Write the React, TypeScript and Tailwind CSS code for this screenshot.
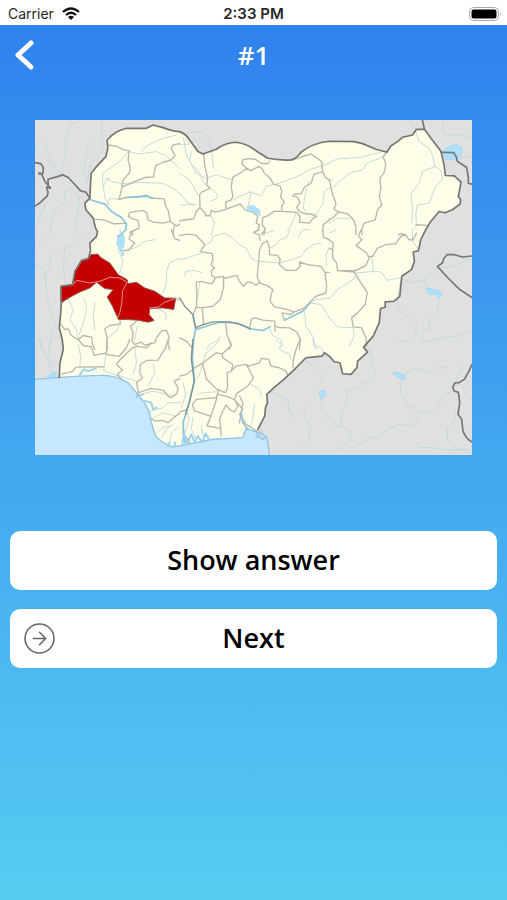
import React from 'react';

const COUNTRY =
  'M180 250L182 205L184 175L200 155L228 125L234 100L232 75Q255 48 290 40L350 40L370 30L400 38Q432 50 450 50Q470 58 480 75L505 110L520 117L560 103Q590 82 620 82Q650 85 680 108L715 130Q750 137 785 135Q800 132 815 112Q850 84 900 79L975 80L1000 86L1040 103L1073 112L1085 93L1105 80L1120 67L1150 60L1162 43L1186 43L1200 62L1236 110L1245 150L1249 182L1276 183L1296 202L1288 245L1295 255L1293 268L1270 285L1248 294L1230 290L1205 320L1190 345L1175 375L1168 408L1152 412L1156 440L1147 465L1118 485L1112 545L1095 560L1068 562L1068 578L1054 582L1050 625L1032 665L1003 698L1015 713L985 740L983 760L965 780L940 778L932 745L915 742L900 725L885 715L878 725L850 728L830 730L815 745L790 770L760 798L735 818L712 840L714 865L708 880L706 905L685 945L680 953L650 942L640 970L590 973L550 975L500 985L450 995L430 998Q390 985 375 960L365 925L355 885L340 860L320 835L295 805Q255 780 210 783L150 785L88 789L90 745L100 705L97 675L88 640L92 600L94 565L93 515L128 510L135 470L155 437L175 432L182 410L180 385L200 365L203 350L197 340L190 310L168 285L165 265Z';

const BORDER =
  'M685 945L706 905L708 880L714 865L712 840L735 818L760 798L790 770L815 745L830 730L850 728L878 725L885 715L900 725L915 742L932 745L940 778L965 780L983 760L985 740L1015 713L1003 698L1032 665L1050 625L1054 582L1068 578L1068 562L1095 560L1112 545L1118 485L1147 465L1156 440L1152 412L1168 408L1175 375L1190 345L1205 320L1230 290L1248 294L1270 285L1293 268L1295 255L1288 245L1296 202L1276 183L1249 182L1245 150L1236 110L1200 62L1186 43L1162 43L1150 60L1120 67L1105 80L1085 93L1073 112L1040 103L1000 86L975 80L900 79Q850 84 815 112Q800 132 785 135Q750 137 715 130L680 108Q650 85 620 82Q590 82 560 103L520 117L505 110L480 75Q470 58 450 50Q432 50 400 38L370 30L350 40L290 40Q255 48 232 75L234 100L228 125L200 155L184 175L182 205L180 250L165 265L168 285L190 310L197 340L203 350L200 365L180 385L182 410L175 432L155 437L135 470L128 510L93 515L94 565L92 600L88 640L97 675L100 705L90 745L88 789';

const NEIGHBOUR_BORDERS =
  'M15 143L32 146L40 158L39 175L27 177M27 174L35 178L45 200L62 220L50 217L54 232L52 243L30 264L15 274M55 217L54 193L80 186L98 180L115 188L135 209L152 228L168 232L180 250M1186 43L1180 15M1236 112L1274 113L1282 126L1285 139L1313 158L1318 187L1318 205L1329 208M1329 424L1300 427L1276 420L1254 420L1245 430L1240 445L1225 455L1257 490L1290 523L1329 549M1329 750L1320 770L1306 795L1290 805L1278 805L1271 818L1275 830L1288 834L1292 865L1287 900L1298 915L1302 950Q1310 973 1329 983';

const COAST =
  'M15 795L88 789L150 785L210 783Q255 780 295 805L320 835L340 860L355 885L365 925L375 960Q390 985 430 998L450 995L500 985L550 975L590 973L640 970L650 942L680 953L690 970L700 975L710 966L716 990L720 1023';

// One group of strokes per tile of the map sheet.
const STATES: { at: string; d: string }[] = [
  {
    at: 'translate(0 0)',
    d: 'M234 90L260 94L280 104L298 108L295 135L302 162L298 175L280 195L276 220L270 245L268 254L290 248L330 247L348 240L365 250L403 252L408 275L415 285L422 320L400 325L370 322L355 315L350 293L340 287L320 290L300 293L296 304L308 312L325 317L328 340L300 352L310 360M195 313L225 316L250 327L290 326M276 217L315 200L345 188L371 186L378 152L400 142L425 135L436 122L425 100L430 90L450 86M422 320L440 334L450 328M433 334L430 360',
  },
  {
    at: 'translate(450 0)',
    d: 'M72 117L75 150L84 188L82 210L91 221L66 232L60 240L61 278L50 290L42 312L0 318M61 278L75 293L78 303L92 303L95 287L106 292L136 285L140 283L138 262L155 255L160 245L155 215L160 187L185 173L202 160L187 147L190 134L210 131L228 133L245 145L264 147L272 138M202 160L214 168L236 155L248 161L254 174L272 190L282 208L302 213L307 230L304 247L315 262L307 275L308 290L352 293L362 306L360 322L390 325L402 310L412 305L395 298L378 297L360 290L352 278L362 262L354 247L340 243L346 238L366 236L376 215L395 206L404 178L430 171L427 140L395 117L360 128L335 137M140 283L165 274L182 267L198 286L222 293L235 305L230 325L240 330L236 345M308 290L285 289L262 304L250 308L248 330L257 342L253 360M430 171L440 190L450 195M450 315L432 330L430 350',
  },
  {
    at: 'translate(900 0)',
    d: 'M172 112L162 125L170 150L164 175L152 190L155 220L150 245L158 270L145 285L138 315L104 326L98 345L98 360M0 195L10 240L20 265L14 284L28 291L55 297L74 317L80 335L80 360M28 291L10 310L0 313M208 360L215 357L228 360M260 330L295 332',
  },
  {
    at: 'translate(0 345)',
    d: 'M278 62L296 62L315 40L298 28L305 10L315 0M438 206L450 212M92 285L105 300L115 298L124 318L145 330L160 318L185 323L188 345L195 360M270 270L272 283L240 288L225 297L232 325L232 360M320 275L302 290L310 310L307 335L315 345L335 338L345 347L375 340L380 325L395 305L410 302M410 302L418 322L415 345L420 360M425 0L435 27L450 32',
  },
  {
    at: 'translate(450 345)',
    d: 'M0 17L25 13L50 17L62 30L76 45L62 66L98 72L100 90L94 105L105 115L95 125L97 138L108 144L130 140L135 146L160 140L172 137L180 155L192 170L203 157L215 158L230 167L241 157L233 143L237 100L240 60L250 40L263 33L270 55L270 75L295 78L302 88L300 105L320 122L350 122L363 110L360 97L385 105L425 110L437 128L442 170L440 190L410 200L392 217L375 235L345 247L315 238L285 232L272 215L275 195L280 180L262 167L240 160M108 144L98 162L82 160L65 155L50 158L52 200L50 233L40 255M132 140L132 175L122 210L100 230L65 235L48 233M68 235L72 285M210 297L215 270L225 264L250 272L285 275L287 290L300 294L330 295L352 307L363 330L360 360M285 290L287 305M315 272L308 250L335 255L345 247M138 278L142 315L155 345L148 360M242 32L238 15L222 8L240 0M245 15L258 0M430 0L432 22L450 30M437 128L450 128M0 325L20 335L40 358',
  },
  {
    at: 'translate(900 345)',
    d: 'M95 0L88 20L98 30L80 47L112 70L120 85L110 107L80 123L25 123L22 100L10 85L10 60L0 55M0 32L12 40L10 60M120 80L130 80L145 55L170 45L200 42L215 20L230 16L240 30L252 30L262 10M25 123L75 127L95 160L114 188L108 225L85 250L67 265L72 292L97 295L110 325L112 350',
  },
  {
    at: 'translate(0 675)',
    d: 'M95 104L128 96L138 83L222 82M145 0L160 18L185 22L192 48L230 40L232 0M230 45L268 51L290 25L300 0M275 55L260 75L278 92L262 105L275 120M275 57L305 27L320 20L350 25L365 10M415 0L408 25L395 45L385 62L350 63L332 75L330 100L338 115L320 130L326 160L340 155L365 147L400 152L415 170L425 175L442 162L445 145L433 125L450 118M326 160L322 175M360 235L375 245L400 243L415 250L432 235L450 222',
  },
  {
    at: 'translate(450 675)',
    d: 'M0 110L20 105L50 82L68 72L110 40L128 43L130 55L160 75L155 95L143 100L144 145L138 160L112 150L80 118L75 95L68 72M128 43L155 18L148 0M155 95L170 80L200 75L222 115L205 140L172 162L165 182L190 210L180 225L200 255L240 280M200 75L208 80L240 70L245 57L268 60L275 80L300 85L320 95L325 108M118 150L110 175L50 180L38 195L45 215L90 230L95 228L112 175M115 165L145 172L165 182L175 200L165 218L150 210L140 197L130 215L120 240L125 290M95 228L82 260L110 265L125 268M340 85L342 60L350 30L362 0M180 170L190 190L185 220L180 250M0 218L20 212M12 250L10 280L30 310M40 0L35 50',
  },
];

const RIVERS: { at: string; d: string }[] = [
  {
    at: 'translate(0 0)',
    d: 'M145 20L118 30L115 60L105 75L108 110L100 150L98 178M15 60L48 90L50 115L70 145L80 160L98 178M15 103L50 130L65 158L98 178M215 20L218 95L205 125L180 150L172 205M196 67L175 95L162 160L170 208M160 245L150 250L122 220L105 230L104 260L75 285L65 320L60 350M48 265L38 290L20 330M298 108L270 140L220 175L218 195L225 250L240 272M335 110L350 93L400 70L440 60M298 110L330 117L380 110L405 120L450 160M226 190L245 200L280 207L330 203L400 205L430 220L450 238M222 210L232 190L240 192M268 254L240 250L232 270M135 350L150 245',
  },
  {
    at: 'translate(450 0)',
    d: 'M18 58Q50 45 72 55Q90 70 95 100L102 160M0 90L30 88L20 70M12 70L20 120L50 175L80 190L110 180L158 195M35 110L30 140L60 175L70 200L110 235L115 250L95 258M0 175L30 195L55 240M0 235L25 265L48 270M95 305L105 325L95 360M160 255L190 240L215 230L212 245L205 280M215 232L245 243L260 215L300 205L365 180L390 165L450 145M388 200L375 250L372 280L385 298L410 298L430 270L435 230L450 220M350 293L340 320L325 350M0 270L48 270M255 355L285 348',
  },
  {
    at: 'translate(900 0)',
    d: 'M0 143L25 132L60 130L100 127L130 117L155 113M10 220L30 200L65 173L100 165L112 145L165 125M260 50L270 80L300 100L312 125L317 155L335 165L340 195L320 215L300 265L265 270L260 300L262 335L250 345M317 155L280 170L272 200L250 232L245 240L250 280L248 325M340 20L345 60L400 60L429 70M240 15L260 43M345 125L380 130L429 125M0 325L25 310L60 312M0 200L10 190M0 355L20 345',
  },
  {
    at: 'translate(0 345)',
    d: 'M75 60L60 80L62 115L48 130L50 200L65 250L78 290L65 315L58 360M15 105L40 115L48 160M122 70L100 110L105 160L92 180M125 185L115 210L130 240L120 270L140 300L145 330M160 205L170 230L165 265L148 315M195 220L190 260L195 300M270 0L275 30L265 60L280 95L270 130M375 30L345 35L315 55L290 60L275 80M450 85L420 100L410 125L410 160L400 190M385 240L408 250L410 270M65 0L45 20L25 50M165 10L130 45L105 55L100 95M15 325L35 330L30 360M270 283L260 305L235 325M322 290L315 330',
  },
  {
    at: 'translate(450 345)',
    d: 'M75 48L95 35L100 20L135 10L160 25L175 42L200 55L215 85L235 95L265 97L300 100L335 90L365 80L380 60L400 45L425 40M270 55L290 45L300 30L320 25L330 5M355 25L370 0L392 0M0 90L25 85L50 75L65 72M15 140L18 125L45 122L68 130M60 160L55 195L52 210M450 205L410 210L392 220M392 220L425 225L450 265M375 245L380 290L400 320L410 358M270 298L280 318L305 330L308 350M125 318L112 335L90 345L80 360M450 55L440 75L442 110',
  },
  {
    at: 'translate(900 345)',
    d: 'M0 207L25 180L40 170L75 147L80 130L135 125L155 127L175 152L210 145L250 160L290 150L300 135L315 130L320 115L370 110L400 97L429 88M125 80L132 105L130 128M215 153L205 205L205 230L225 255L262 285L260 310L240 335L200 335M285 150L298 175M330 205L325 250L300 275L300 295L280 305L275 330L290 337L350 322L390 320L415 305L429 302M0 265L25 292L72 295L75 320L60 350M250 0L250 35L265 55',
  },
  {
    at: 'translate(0 675)',
    d: 'M25 0L50 50L65 100M60 0L55 40L70 90M145 15L152 50L150 82M228 40L222 95M315 25L320 70L310 105M370 75L375 100L355 140M335 165L370 155L430 170M365 215L400 205L415 190L450 190M365 240L400 220L435 230M375 285L400 265L420 260M395 295L410 270L430 255M420 312L425 280L445 265M225 95L260 107L320 125',
  },
  {
    at: 'translate(450 675)',
    d: 'M120 0L100 25L80 40L68 75L60 105L42 130M5 205L18 165L10 130M55 165L70 160L110 157M15 280L30 240L20 215M50 300L35 270L40 235M72 295L65 260M215 135L240 150L245 170M225 195L220 240L210 265M275 157L325 180L330 215L348 238M382 193L372 230L385 245L395 265L388 300L365 315L345 345M430 190L425 215L450 238M370 60L405 80L425 105L428 130M290 0L305 15L300 30L330 45L335 60M400 0L405 20L425 25L435 40M242 250L245 290',
  },
  {
    at: 'translate(900 675)',
    d: 'M125 25L128 75L140 100L130 120L90 140L55 153L52 190L38 215L36 260L65 280L60 305L30 330L0 343M0 235L20 260L36 262M68 300L90 318L125 293L140 298L180 265L210 255L250 260L265 245L268 215L300 222L325 200L345 170L365 155L385 135L385 110L402 80M268 215L235 195L215 160L213 130L230 100L265 87L305 100L330 80L355 87M380 215L378 245L355 265L355 300L375 325L410 335M262 310L268 325L310 325L360 333L420 330L425 340M400 135L410 165L425 180',
  },
];

function NigeriaMap() {
  return (
    <svg
      viewBox="15 15 1314 1008"
      role="img"
      aria-label="Map of Nigeria with one state highlighted"
      className="block w-full"
      fill="none"
      strokeLinejoin="round"
      strokeLinecap="round"
    >
      <rect x="15" y="15" width="1314" height="1008" fill="#e0e0e0" />
      <path d={COUNTRY} fill="#fefee9" />
      <path d={`${COAST}L15 1023Z`} fill="#c6e7ff" />
      <g stroke="#c3dadd" strokeWidth="3">
        {RIVERS.map((tile) => (
          <path key={tile.at} d={tile.d} transform={tile.at} />
        ))}
      </g>
      <g stroke="#bdb5aa" strokeWidth="4">
        {STATES.map((tile) => (
          <path key={tile.at} d={tile.d} transform={tile.at} />
        ))}
      </g>
      <path
        d="M183 420L203 418L215 430L240 445L265 480L292 495L295 507L320 503L345 520L375 530L405 550L438 551L432 585L400 580L360 582L358 600L373 618L355 623L325 617L290 615L266 615L248 575L232 547L250 525L225 522L200 503L180 520L150 532L120 548L93 565L93 515L128 510L135 470L155 437L175 432Z"
        fill="#c40000"
        stroke="#8e5a50"
        strokeWidth="3"
      />
      <path
        d="M130 510L140 497L180 505L210 500L240 488L270 490L292 503L278 530L276 565L270 595L262 612M360 580L385 578L405 563L436 552"
        stroke="#e0938b"
        strokeWidth="3"
      />
      <path d={COAST} stroke="#8cc5e0" strokeWidth="4" />
      <path
        d="M180 255L225 268L245 290L275 308L290 328L288 345L270 362M500 645L530 635L570 623L620 625L662 643L700 648L722 637M765 617L820 590L842 565M490 605L498 640L492 675L488 725L494 800L480 860L468 900L460 925L465 985M635 895L640 925L655 945M290 248L348 244L370 250"
        stroke="#8cc4dc"
        strokeWidth="5"
      />
      <path
        d="M450 550L465 575L490 600L498 640L520 630L550 622L600 622L640 632L662 643M490 675L485 735L494 800L480 860L468 900"
        stroke="#7f9299"
        strokeWidth="4"
      />
      <path
        d="M265 362L270 400L280 420M278 358L280 395M150 780L162 765L175 770L198 762M345 860L365 865L370 885L380 880M322 845L340 840M358 890L362 910M458 990L462 960L472 990L485 960L495 985L505 965L518 985L528 958L538 975M415 998L420 985M435 995L436 985M680 970L695 955L705 965"
        stroke="#9ed2ee"
        strokeWidth="6"
      />
      <path
        d="M655 275L670 272L690 285L692 303L675 292L655 289ZM1240 110L1260 95L1280 88L1300 100L1297 120L1275 135L1250 133ZM265 370L278 355L285 375L278 400L270 405L260 385ZM1192 520L1205 522L1225 527L1240 535L1230 550L1215 537L1200 540ZM870 832L885 828L892 840L875 855ZM1090 775L1110 775L1130 785L1125 797L1105 790ZM68 775L80 773L76 788L50 787Z"
        fill="#ade0fa"
        stroke="#9ed2ee"
        strokeWidth="2"
      />
      <path d={NEIGHBOUR_BORDERS} stroke="#777575" strokeWidth="5" />
      <path d={BORDER} stroke="#777470" strokeWidth="5" />
    </svg>
  );
}

function StatusBar() {
  return (
    <div className="grid h-[25px] grid-cols-[1fr_auto_1fr] items-center bg-white pt-[2px] font-['Inter',sans-serif] text-neutral-800">
      <div className="flex items-center gap-2 pl-2">
        <span className="text-[14px]">Carrier</span>
        <svg viewBox="0 0 18 14" className="h-[14px] w-[18px]" role="img" aria-label="Wi-Fi">
          <path d="M1 5Q9-2 17 5M4 8Q9 3.500 14 8" fill="none" stroke="#111" strokeWidth="2.300" />
          <path d="M6 10Q9 7.500 12 10L9 13Z" fill="#111" />
        </svg>
      </div>
      <span className="text-[15px] leading-5 font-semibold">2:33 PM</span>
      <div className="flex justify-end pr-[6px]">
        <svg viewBox="0 0 32 14" className="h-[14px] w-[32px]" role="img" aria-label="Battery full">
          <rect x="0.500" y="0.500" width="29" height="13" rx="4" fill="#fff" stroke="#aaa" />
          <rect x="2.500" y="2.500" width="25" height="9" rx="2" fill="#000" />
          <path d="M31 5Q32.500 7 31 9Z" fill="#999" />
        </svg>
      </div>
    </div>
  );
}

export default function App() {
  return (
    <div className="flex min-h-screen flex-col bg-[linear-gradient(180deg,#2f80ed,#56ccf2)] font-['Open_Sans','Noto_Sans',sans-serif]">
      <StatusBar />
      <header className="grid h-[60px] grid-cols-3 items-center text-white">
        <button type="button" aria-label="Back" className="flex h-11 w-12 items-center pl-[15px]">
          <svg viewBox="0 0 19 30" className="h-[30px] w-[19px]">
            <path d="M16 3L3 15L16 27" fill="none" stroke="#fff" strokeWidth="5" strokeLinecap="round" strokeLinejoin="round" />
          </svg>
        </button>
        <h1 className="text-center text-[26px] leading-8 font-semibold">#1</h1>
      </header>
      <main className="flex flex-col">
        <div className="px-[35px] pt-[35px]">
          <NigeriaMap />
        </div>
        <div className="mt-[76px] flex flex-col gap-[19px] px-[10px]">
          <button type="button" className="h-[59px] rounded-[10px] bg-white text-[27px] font-semibold text-black">
            Show answer
          </button>
          <button
            type="button"
            className="grid h-[59px] grid-cols-[1fr_auto_1fr] items-center rounded-[10px] bg-white px-[14px] text-[27px] font-semibold text-black"
          >
            <svg viewBox="0 0 30 30" className="h-[31px] w-[31px]" fill="none" stroke="#666" strokeWidth="1.500" strokeLinecap="round" strokeLinejoin="round">
              <circle cx="15" cy="15" r="14" />
              <path d="M9 15H21M15 9L21 15L15 21" />
            </svg>
            Next
          </button>
        </div>
      </main>
    </div>
  );
}
